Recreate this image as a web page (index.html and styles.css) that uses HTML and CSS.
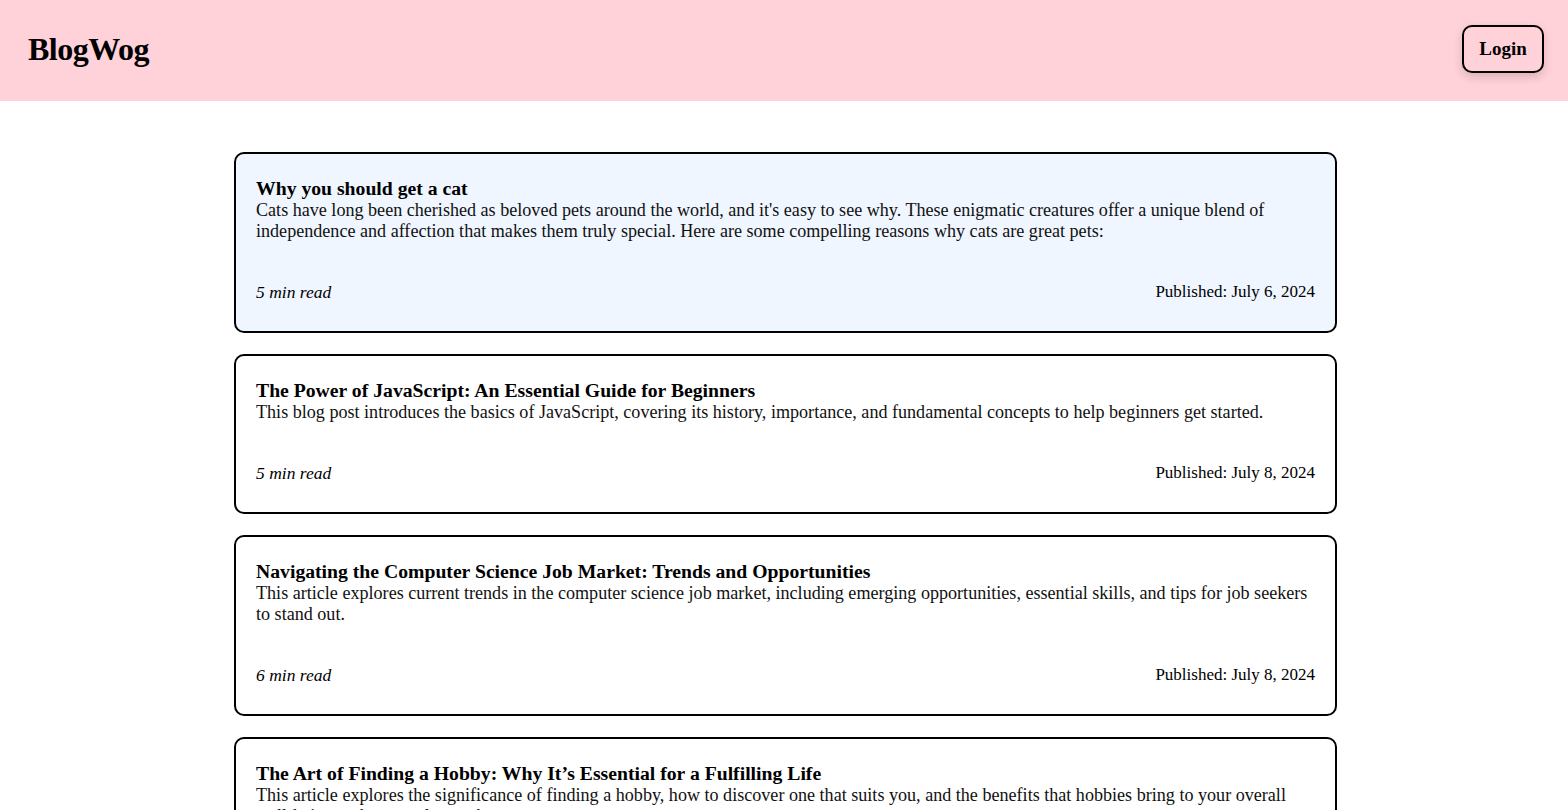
FILE: index.html
```html
<!DOCTYPE html>
<html lang="en">
<head>
<meta charset="utf-8">
<title>BlogWog</title>
<link rel="stylesheet" href="styles.css">
</head>
<body>
<header class="topbar">
  <div class="logo">BlogWog</div>
  <button class="login">Login</button>
</header>
<main class="feed">
  <article class="card card-active">
    <h2 class="card-title">Why you should get a cat</h2>
    <p class="card-desc">Cats have long been cherished as beloved pets around the world, and it's easy to see why. These enigmatic creatures offer a unique blend of independence and affection that makes them truly special. Here are some compelling reasons why cats are great pets:</p>
    <div class="card-meta"><span class="read">5 min read</span><span class="date">Published: July 6, 2024</span></div>
  </article>
  <article class="card">
    <h2 class="card-title">The Power of JavaScript: An Essential Guide for Beginners</h2>
    <p class="card-desc">This blog post introduces the basics of JavaScript, covering its history, importance, and fundamental concepts to help beginners get started.</p>
    <div class="card-meta"><span class="read">5 min read</span><span class="date">Published: July 8, 2024</span></div>
  </article>
  <article class="card">
    <h2 class="card-title">Navigating the Computer Science Job Market: Trends and Opportunities</h2>
    <p class="card-desc">This article explores current trends in the computer science job market, including emerging opportunities, essential skills, and tips for job seekers to stand out.</p>
    <div class="card-meta"><span class="read">6 min read</span><span class="date">Published: July 8, 2024</span></div>
  </article>
  <article class="card">
    <h2 class="card-title">The Art of Finding a Hobby: Why It’s Essential for a Fulfilling Life</h2>
    <p class="card-desc">This article explores the significance of finding a hobby, how to discover one that suits you, and the benefits that hobbies bring to your overall well-being and personal growth.</p>
    <div class="card-meta"><span class="read">5 min read</span><span class="date">Published: July 9, 2024</span></div>
  </article>
</main>
</body>
</html>
```
FILE: styles.css
```css
* { box-sizing: border-box; }
body {
  margin: 0;
  font-family: "Liberation Serif", "Times New Roman", serif;
  color: #000;
  background: #fff;
}
.topbar {
  height: 101px;
  background: #ffd1d9;
  display: flex;
  align-items: center;
  justify-content: space-between;
  padding: 0 24px 0 28px;
}
.logo {
  font-size: 32px;
  font-weight: 700;
  letter-spacing: -0.5px;
  margin-top: -3px;
}
.login {
  font-family: inherit;
  font-size: 19px;
  font-weight: 700;
  color: #000;
  background: #ffd1d9;
  border: 2px solid #000;
  border-radius: 10px;
  width: 82px;
  height: 48px;
  box-shadow: 0 4px 10px rgba(0,0,0,0.15);
  margin-top: -4px;
}
.feed {
  width: 1103px;
  margin: 51px 0 0 calc(50% - 550px);
  display: flex;
  flex-direction: column;
  gap: 21px;
}
.card {
  border: 2px solid #000;
  border-radius: 10px;
  padding: 22px 20px 27px;
  background: #fff;
}
.card-active { background: #eff6ff; }
.card-title {
  margin: 0;
  font-size: 19.7px;
  line-height: 24px;
  font-weight: 700;
}
.card-desc {
  margin: 0;
  font-size: 18.1px;
  line-height: 21px;
  color: #111;
}
.card-meta {
  margin-top: 38px;
  display: flex;
  justify-content: space-between;
  font-size: 17px;
  line-height: 24px;
}
.read { font-style: italic; font-size: 17.5px; }
```
